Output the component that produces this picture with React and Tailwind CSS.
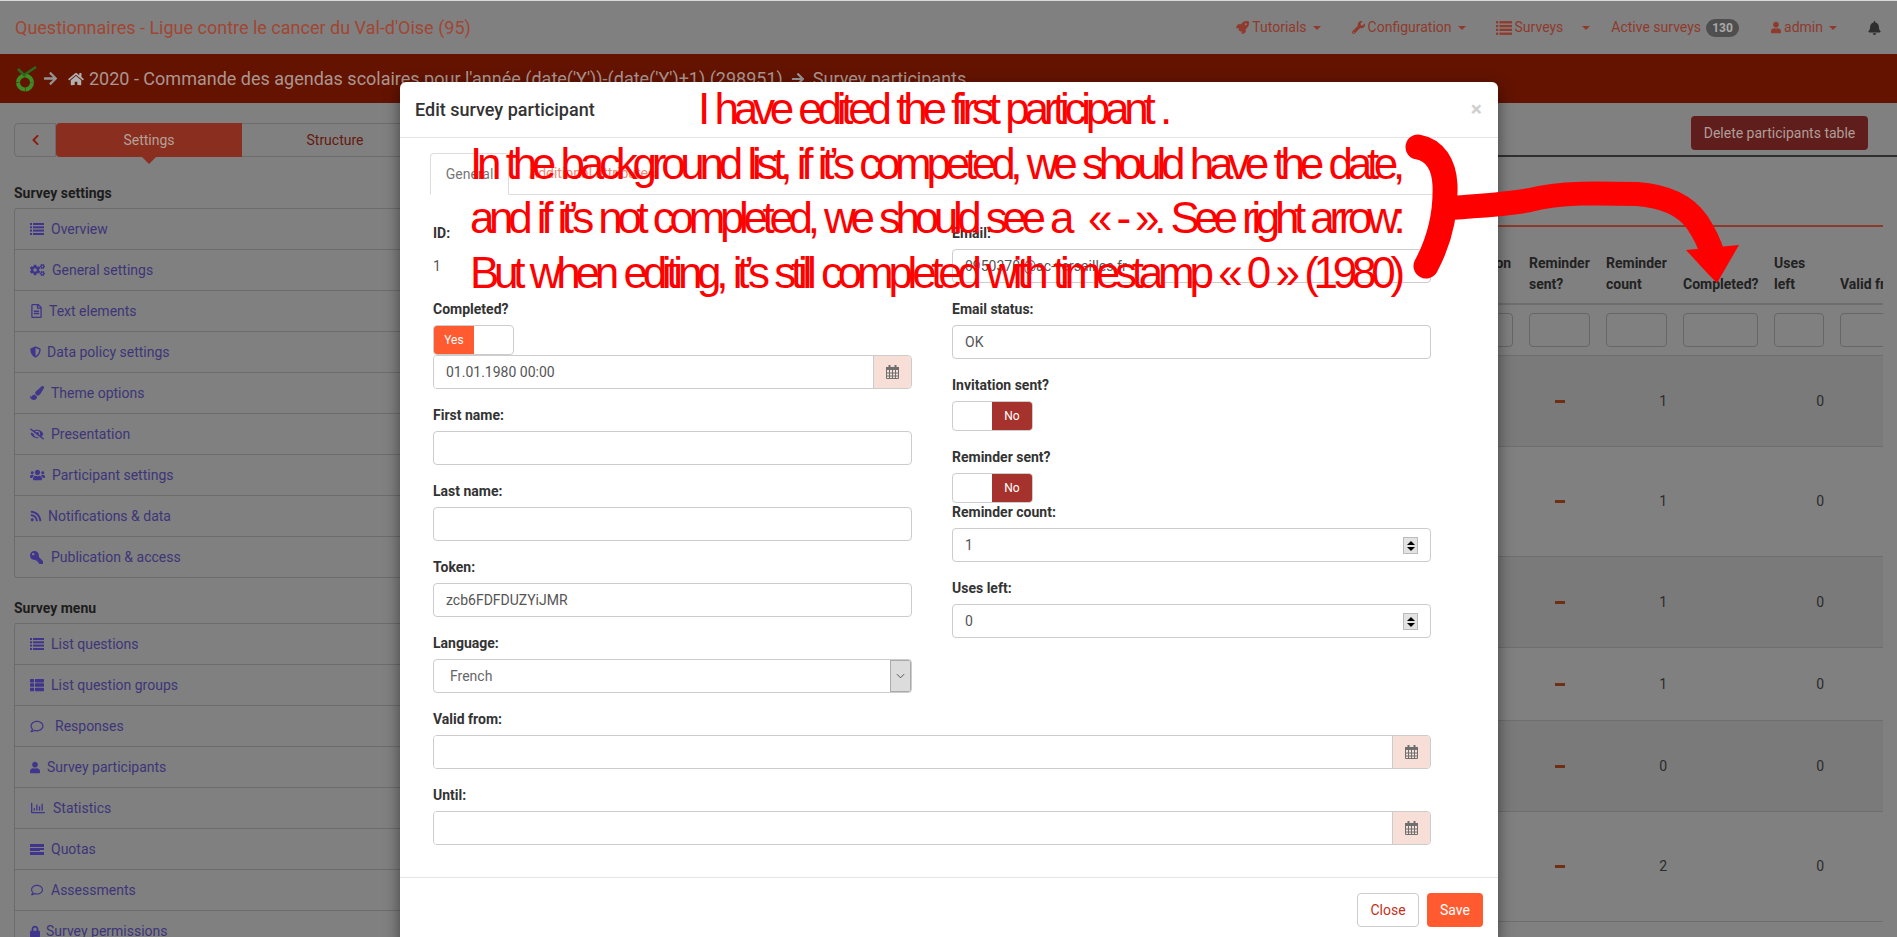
import React from "react";
import {
  FaRocket, FaWrench, FaUser, FaBell, FaHome, FaArrowRight, FaCogs, FaRegFileAlt, FaShieldAlt,
  FaPaintBrush, FaEyeSlash, FaUsers, FaRss, FaKey, FaThList, FaRegComment, FaRegChartBar, FaLock, FaChevronLeft,
} from "react-icons/fa";

// FA4 style list, the package one has round bullets
const ListIcon = ({ className = "w-[14px] h-[12px]" }) => (
  <svg viewBox="0 0 14 12" className={className} fill="currentColor">
    <rect x="0" y="0" width="2" height="2" />
    <rect x="3" y="0" width="11" height="2" />
    <rect x="0" y="3.3" width="2" height="2" />
    <rect x="3" y="3.3" width="11" height="2" />
    <rect x="0" y="6.6" width="2" height="2" />
    <rect x="3" y="6.6" width="11" height="2" />
    <rect x="0" y="10" width="2" height="2" />
    <rect x="3" y="10" width="11" height="2" />
  </svg>
);

const settingsItems = [
  { icon: <ListIcon />, box: "w-[21px]", label: "Overview" },
  { icon: <FaCogs className="w-[15px] h-[14px]" />, box: "w-[22px]", label: "General settings" },
  { icon: <FaRegFileAlt className="w-[13px] h-[14px]" />, box: "w-[19px]", label: "Text elements" },
  { icon: <FaShieldAlt className="w-[11px] h-[14px]" />, box: "w-[17px]", label: "Data policy settings" },
  { icon: <FaPaintBrush className="w-[14px] h-[14px]" />, box: "w-[21px]", label: "Theme options" },
  { icon: <FaEyeSlash className="w-[14px] h-[12px]" />, box: "w-[21px]", label: "Presentation" },
  { icon: <FaUsers className="w-[15px] h-[14px]" />, box: "w-[22px]", label: "Participant settings" },
  { icon: <FaRss className="w-[12px] h-[12px]" />, box: "w-[18px]", label: "Notifications & data" },
  { icon: <FaKey className="w-[13px] h-[13px] -scale-x-100" />, box: "w-[21px]", label: "Publication & access" },
];

const QuotaIcon = () => (
  <svg viewBox="0 0 14 11" className="w-[14px] h-[11px]" fill="currentColor">
    <rect x="0" y="0" width="14" height="3" />
    <rect x="4" y="4" width="10" height="2" />
    <rect x="0" y="4" width="10" height="3" />
    <rect x="0" y="8" width="14" height="3" />
  </svg>
);

const menuItems = [
  { icon: <ListIcon />, box: "w-[21px]", label: "List questions" },
  { icon: <FaThList className="w-[14px] h-[14px]" />, box: "w-[21px]", label: "List question groups" },
  { icon: <FaRegComment className="w-[14px] h-[13px]" />, box: "w-[25px]", label: "Responses" },
  { icon: <FaUser className="w-[10px] h-[13px]" />, box: "w-[17px]", label: "Survey participants" },
  { icon: <FaRegChartBar className="w-[16px] h-[14px]" />, box: "w-[23px]", label: "Statistics" },
  { icon: <QuotaIcon />, box: "w-[21px]", label: "Quotas" },
  { icon: <FaRegComment className="w-[14px] h-[12px]" />, box: "w-[21px]", label: "Assessments" },
  { icon: <FaLock className="w-[10px] h-[13px]" />, box: "w-[16px]", label: "Survey permissions" },
];

const rows = [
  { h: "h-[91px]", shaded: true, count: 1 },
  { h: "h-[110px]", shaded: false, count: 1 },
  { h: "h-[91px]", shaded: true, count: 1 },
  { h: "h-[73px]", shaded: false, count: 1 },
  { h: "h-[91px]", shaded: true, count: 0 },
  { h: "h-[110px]", shaded: false, count: 2 },
];

const gridCols = "grid grid-cols-[1fr_77px_77px_91px_66px_51px]";

function Caret({ className = "" }) {
  return <span className={`inline-block w-0 h-0 border-x-[4px] border-t-[4px] border-x-transparent border-t-[#8f3a2c] ${className}`} />;
}

function NavItem({ icon, label, className = "", caretClass = "ml-[6px]" }) {
  return (
    <div className={`flex items-center text-[#8f3a2c] ${className}`}>
      <span className="mr-[3px]">{icon}</span>
      <span>{label}</span>
      <Caret className={caretClass} />
    </div>
  );
}

function SideList({ items }) {
  return (
    <div className="border-x border-b border-[#6c6c6c] rounded-[4px]">
      {items.map((item) => (
        <div key={item.label} className="h-[41px] border-t border-[#6c6c6c] flex items-center pl-[15px] text-[14px] text-[#3d3578]">
          <span className={`${item.box} shrink-0 flex items-center text-[#3f358c]`}>{item.icon}</span>
          <span>{item.label}</span>
        </div>
      ))}
    </div>
  );
}

function CalendarIcon() {
  return (
    <svg viewBox="0 0 13 14" className="w-[13px] h-[14px]">
      <rect x="0" y="2" width="13" height="3" fill="#6f6f6f" />
      <rect x="2.5" y="0" width="2" height="3.5" fill="#6f6f6f" />
      <rect x="8.5" y="0" width="2" height="3.5" fill="#6f6f6f" />
      <path d="M.5 5v8.5h12V5M.5 8h12M.5 11h12M3.5 5v8.5M6.5 5v8.5M9.5 5v8.5" fill="none" stroke="#6f6f6f" strokeWidth="1" />
    </svg>
  );
}

function Field({ label, children, className = "mb-[16px]" }) {
  return (
    <div className={className}>
      <div className="h-[20px] mb-[6px] flex items-center font-bold text-[14px] text-[#333]">{label}</div>
      {children}
    </div>
  );
}

function TextBox({ value = "", children }) {
  return (
    <div className="relative h-[34px] border border-[#ccc] rounded-[4px] bg-white flex items-center pl-[12px] text-[14px] text-[#555]">
      {value}
      {children}
    </div>
  );
}

function DateBox({ value = "" }) {
  return (
    <div className="h-[34px] flex border border-[#ccc] rounded-[4px] overflow-hidden">
      <div className="flex-1 flex items-center pl-[12px] text-[14px] text-[#555] bg-white">{value}</div>
      <div className="w-[38px] bg-[#f7dfd8] border-l border-[#ccc] flex items-center justify-center">
        <CalendarIcon />
      </div>
    </div>
  );
}

function Spinner() {
  return (
    <div className="absolute right-[12px] top-[8px] w-[15px] h-[17px] bg-[#e3e3e3] border border-[#bbb] flex flex-col items-center justify-center gap-[2px]">
      <span className="w-0 h-0 border-x-[4px] border-b-[4px] border-x-transparent border-b-black" />
      <span className="w-0 h-0 border-x-[4px] border-t-[4px] border-x-transparent border-t-black" />
    </div>
  );
}

function Toggle({ on }) {
  return (
    <div className={`w-[81px] h-[30px] border border-[#ccc] rounded-[4px] overflow-hidden flex text-white text-[12px] bg-white ${on ? "" : "justify-end"}`}>
      <div className={`w-[40px] flex items-center justify-center ${on ? "bg-[#ff5a30]" : "bg-[#a5322d]"}`}>{on ? "Yes" : "No"}</div>
    </div>
  );
}

function Modal() {
  return (
    <div className="absolute left-[400px] top-[82px] w-[1098px] bg-white rounded-[6px] shadow-[0_5px_15px_rgba(0,0,0,0.5)]">
      <div className="h-[56px] border-b border-[#e5e5e5] flex items-center justify-between pl-[15px] pr-[16px]">
        <span className="text-[18px] font-medium text-[#333]">Edit survey participant</span>
        <span className="text-[21px] font-bold text-[#cfcfcf] leading-none">×</span>
      </div>

      <div className="pl-[33px] pr-[67px] pt-[15px] pb-[16px]">
        <div className="-ml-[3px] -mr-[2px] h-[42px] flex border-b border-[#ddd] text-[14px]">
          <div className="w-[79px] h-[42px] border border-[#ddd] border-b-white rounded-t-[4px] flex items-center justify-center text-[#777] bg-white">General</div>
          <div className="ml-[20px] flex items-center text-[#ef8a78]">Additional attributes</div>
        </div>

        <div className="mt-[28px] grid grid-cols-2 gap-x-[40px]">
          <div>
            <Field label="ID:">
              <div className="h-[34px] flex items-center text-[14px] text-[#555]">1</div>
            </Field>
            <Field label="Completed?">
              <Toggle on />
              <DateBox value="01.01.1980 00:00" />
            </Field>
            <Field label="First name:"><TextBox /></Field>
            <Field label="Last name:"><TextBox /></Field>
            <Field label="Token:"><TextBox value="zcb6FDFDUZYiJMR" /></Field>
            <Field label="Language:">
              <div className="h-[34px] flex border border-[#ccc] rounded-[4px] overflow-hidden text-[14px] text-[#666]">
                <div className="flex-1 flex items-center pl-[16px]">French</div>
                <div className="w-[21px] bg-[#dcdcdc] border border-[#aaa] flex items-center justify-center">
                  <svg viewBox="0 0 10 6" className="w-[9px] h-[6px]"><path d="M1 1l4 4 4-4" fill="none" stroke="#444" strokeWidth="1" /></svg>
                </div>
              </div>
            </Field>
          </div>
          <div>
            <Field label="Email:"><TextBox value="0950370l@ac-versailles.fr" /></Field>
            <Field label="Email status:"><TextBox value="OK" /></Field>
            <Field label="Invitation sent?"><Toggle /></Field>
            <Field label="Reminder sent?" className="-mb-[1px]"><Toggle /></Field>
            <Field label="Reminder count:"><TextBox value="1"><Spinner /></TextBox></Field>
            <Field label="Uses left:"><TextBox value="0"><Spinner /></TextBox></Field>
          </div>
        </div>

        <Field label="Valid from:"><DateBox /></Field>
        <Field label="Until:"><DateBox /></Field>
      </div>

      <div className="border-t border-[#e5e5e5] flex justify-end gap-[8px] pt-[15px] pb-[15px] pr-[15px] text-[14px]">
        <div className="w-[62px] h-[34px] border border-[#ccc] rounded-[4px] flex items-center justify-center text-[#c2311c]">Close</div>
        <div className="w-[56px] h-[34px] rounded-[4px] bg-[#ff5a30] flex items-center justify-center text-white">Save</div>
      </div>
    </div>
  );
}

function Annotation() {
  return (
    <>
      <div className="absolute left-[470px] top-[82px] text-[#ff0000] text-[44px] leading-[54.5px] tracking-[-5.25px] [word-spacing:2.5px] whitespace-pre font-['Liberation_Sans',sans-serif]">
        <div className="pl-[228px]">I have edited the first participant .</div>
        <div>In the background list, if it’s competed, we should have the date,</div>
        <div className="tracking-[-5.35px]">and if it’s not completed, we should see a  « - ». See right arrow:</div>
        <div>But when editing, it’s still completed with timestamp « 0 » (1980)</div>
      </div>
      <svg className="absolute left-0 top-0 pointer-events-none" width="1897" height="937" fill="none">
        <path d="M1418 147C1435 150 1444 165 1445 185C1446 215 1440 240 1426 266" stroke="#ff0000" strokeWidth="25" strokeLinecap="round" />
        <path d="M1450 208C1490 205 1510 204 1530 200C1560 192 1600 193 1637 194C1665 196 1685 205 1697 222C1705 234 1710 245 1713 255" stroke="#ff0000" strokeWidth="24" />
        <path d="M1686 250l53-5-22 38-8-8z" fill="#ff0000" />
      </svg>
    </>
  );
}

export default function App() {
  return (
    <div className="relative w-[1897px] h-[937px] overflow-hidden bg-[#808080] font-['Roboto',sans-serif]">
      <header className="h-[54px] border-t border-[#d8d8d8] flex items-center pl-[15px] pr-[16px] text-[14px]">
        <span className="text-[18px] text-[#a04633]">Questionnaires - Ligue contre le cancer du Val-d'Oise (95)</span>
        <div className="ml-auto flex items-center">
          <NavItem icon={<FaRocket className="w-[13px] h-[13px]" />} label="Tutorials" />
          <NavItem className="ml-[31px]" icon={<FaWrench className="w-[13px] h-[13px]" />} label="Configuration" />
          <NavItem className="ml-[30px]" caretClass="ml-[19px]" icon={<ListIcon className="w-[16px] h-[14px]" />} label="Surveys" />
          <div className="ml-[21px] flex items-center text-[#8f3a2c]">
            <span>Active surveys</span>
            <span className="ml-[5px] w-[33px] h-[18px] rounded-[9px] bg-[#4f4f4f] text-[#a9a9a9] text-[12px] font-bold flex items-center justify-center">130</span>
          </div>
          <NavItem className="ml-[32px]" icon={<FaUser className="w-[10px] h-[13px]" />} label="admin" />
          <FaBell className="ml-[31px] w-[13px] h-[14px] text-[#2e2e2e]" />
        </div>
      </header>

      <div className="h-[49px] bg-[#641300] flex items-center pl-[13px] text-[18px] text-[#ab9690] whitespace-nowrap">
        <svg viewBox="0 0 24 26" className="w-[24px] h-[26px] shrink-0">
          <circle cx="12" cy="16.5" r="7" fill="none" stroke="#3c8d24" strokeWidth="4" strokeDasharray="10.5 0.5" />
          <path d="M5 3l6 6L23 1" fill="none" stroke="#2a6a1c" strokeWidth="2.5" />
        </svg>
        <FaArrowRight className="ml-[6px] w-[15px] h-[15px] text-[#949494]" />
        <FaHome className="ml-[10px] w-[16px] h-[14px] text-[#b0b0b0]" />
        <span className="ml-[5px]">2020 - Commande des agendas scolaires pour l'année (date('Y'))-(date('Y')+1) (298951)</span>
        <FaArrowRight className="mx-[8px] w-[14px] h-[14px] text-[#999]" />
        <span>Survey participants</span>
      </div>

      <div className="flex">
        <aside className="w-[430px] shrink-0 pl-[14px] pr-[2px] pt-[20px]">
          <div className="flex h-[34px] text-[14px]">
            <div className="w-[42px] border border-[#6c6c6c] rounded-l-[4px] flex items-center justify-center text-[#8a1c0c]">
              <FaChevronLeft className="w-[9px] h-[12px]" />
            </div>
            <div className="relative w-[186px] bg-[#8a2f1f] rounded-l-[4px] flex items-center justify-center text-[#b5a09a]">
              Settings
              <span className="absolute left-[86px] top-[34px] w-0 h-0 border-x-[7px] border-t-[7px] border-x-transparent border-t-[#8a2f1f]" />
            </div>
            <div className="flex-1 border-y border-[#6c6c6c] flex items-center justify-center text-[#641a10]">Structure</div>
          </div>
          <div className="mt-[24px] mb-[2px] h-[25px] font-bold text-[14px] text-[#1c1c1c] flex items-center">Survey settings</div>
          <SideList items={settingsItems} />
          <div className="mt-[18px] mb-[2px] h-[25px] font-bold text-[14px] text-[#1c1c1c] flex items-center">Survey menu</div>
          <SideList items={menuItems} />
        </aside>

        <main className="flex-1 min-w-0 text-[14px]">
          <div className="h-[54px] border-b-2 border-[#2f2f2f] flex justify-end items-start pt-[13px] pr-[29px]">
            <div className="w-[177px] h-[34px] rounded-[4px] bg-[#5f1e1c] text-[#b09c98] flex items-center justify-center">Delete participants table</div>
          </div>
          <div className="pr-[14px] pt-[68px]">
            <div className="border-t-2 border-[#8b3a2c]" />
            <div className="overflow-hidden">
              <div className={`${gridCols} h-[78px] border-b-2 border-[#6e6e6e] font-bold text-[#222] leading-[21px] items-end pb-[8px]`}>
                <div className="justify-self-end w-[69px]">Invitation<br />sent?</div>
                <div className="pl-[8px]">Reminder<br />sent?</div>
                <div className="pl-[8px]">Reminder<br />count</div>
                <div className="pl-[8px]">Completed?</div>
                <div className="pl-[8px]">Uses<br />left</div>
                <div className="pl-[8px] whitespace-nowrap">Valid from</div>
              </div>
              <div className={`${gridCols} h-[51px] border-b border-[#6e6e6e] pt-[8px]`}>
                <div className="justify-self-end mr-[8px] w-[61px] h-[34px] border border-[#666] rounded-[4px]" />
                {["w-[61px]", "w-[61px]", "w-[75px]", "w-[50px]", "w-[60px]"].map((w, i) => (
                  <div key={i} className={`ml-[8px] ${w} h-[34px] border border-[#666] rounded-[4px]`} />
                ))}
              </div>
              {rows.map((row, i) => (
                <div key={i} className={`${gridCols} ${row.h} border-b border-[#6e6e6e] items-center text-[#2b2b2b] ${row.shaded ? "bg-[#7a7a7a]" : ""}`}>
                  <div />
                  <div className="flex justify-center"><span className="w-[10px] h-[3px] bg-[#6e2f12]" /></div>
                  <div className="text-right pr-[8px]">{row.count}</div>
                  <div />
                  <div className="text-right pr-[8px]">0</div>
                  <div />
                </div>
              ))}
            </div>
          </div>
        </main>
      </div>

      <Modal />
      <Annotation />
    </div>
  );
}
